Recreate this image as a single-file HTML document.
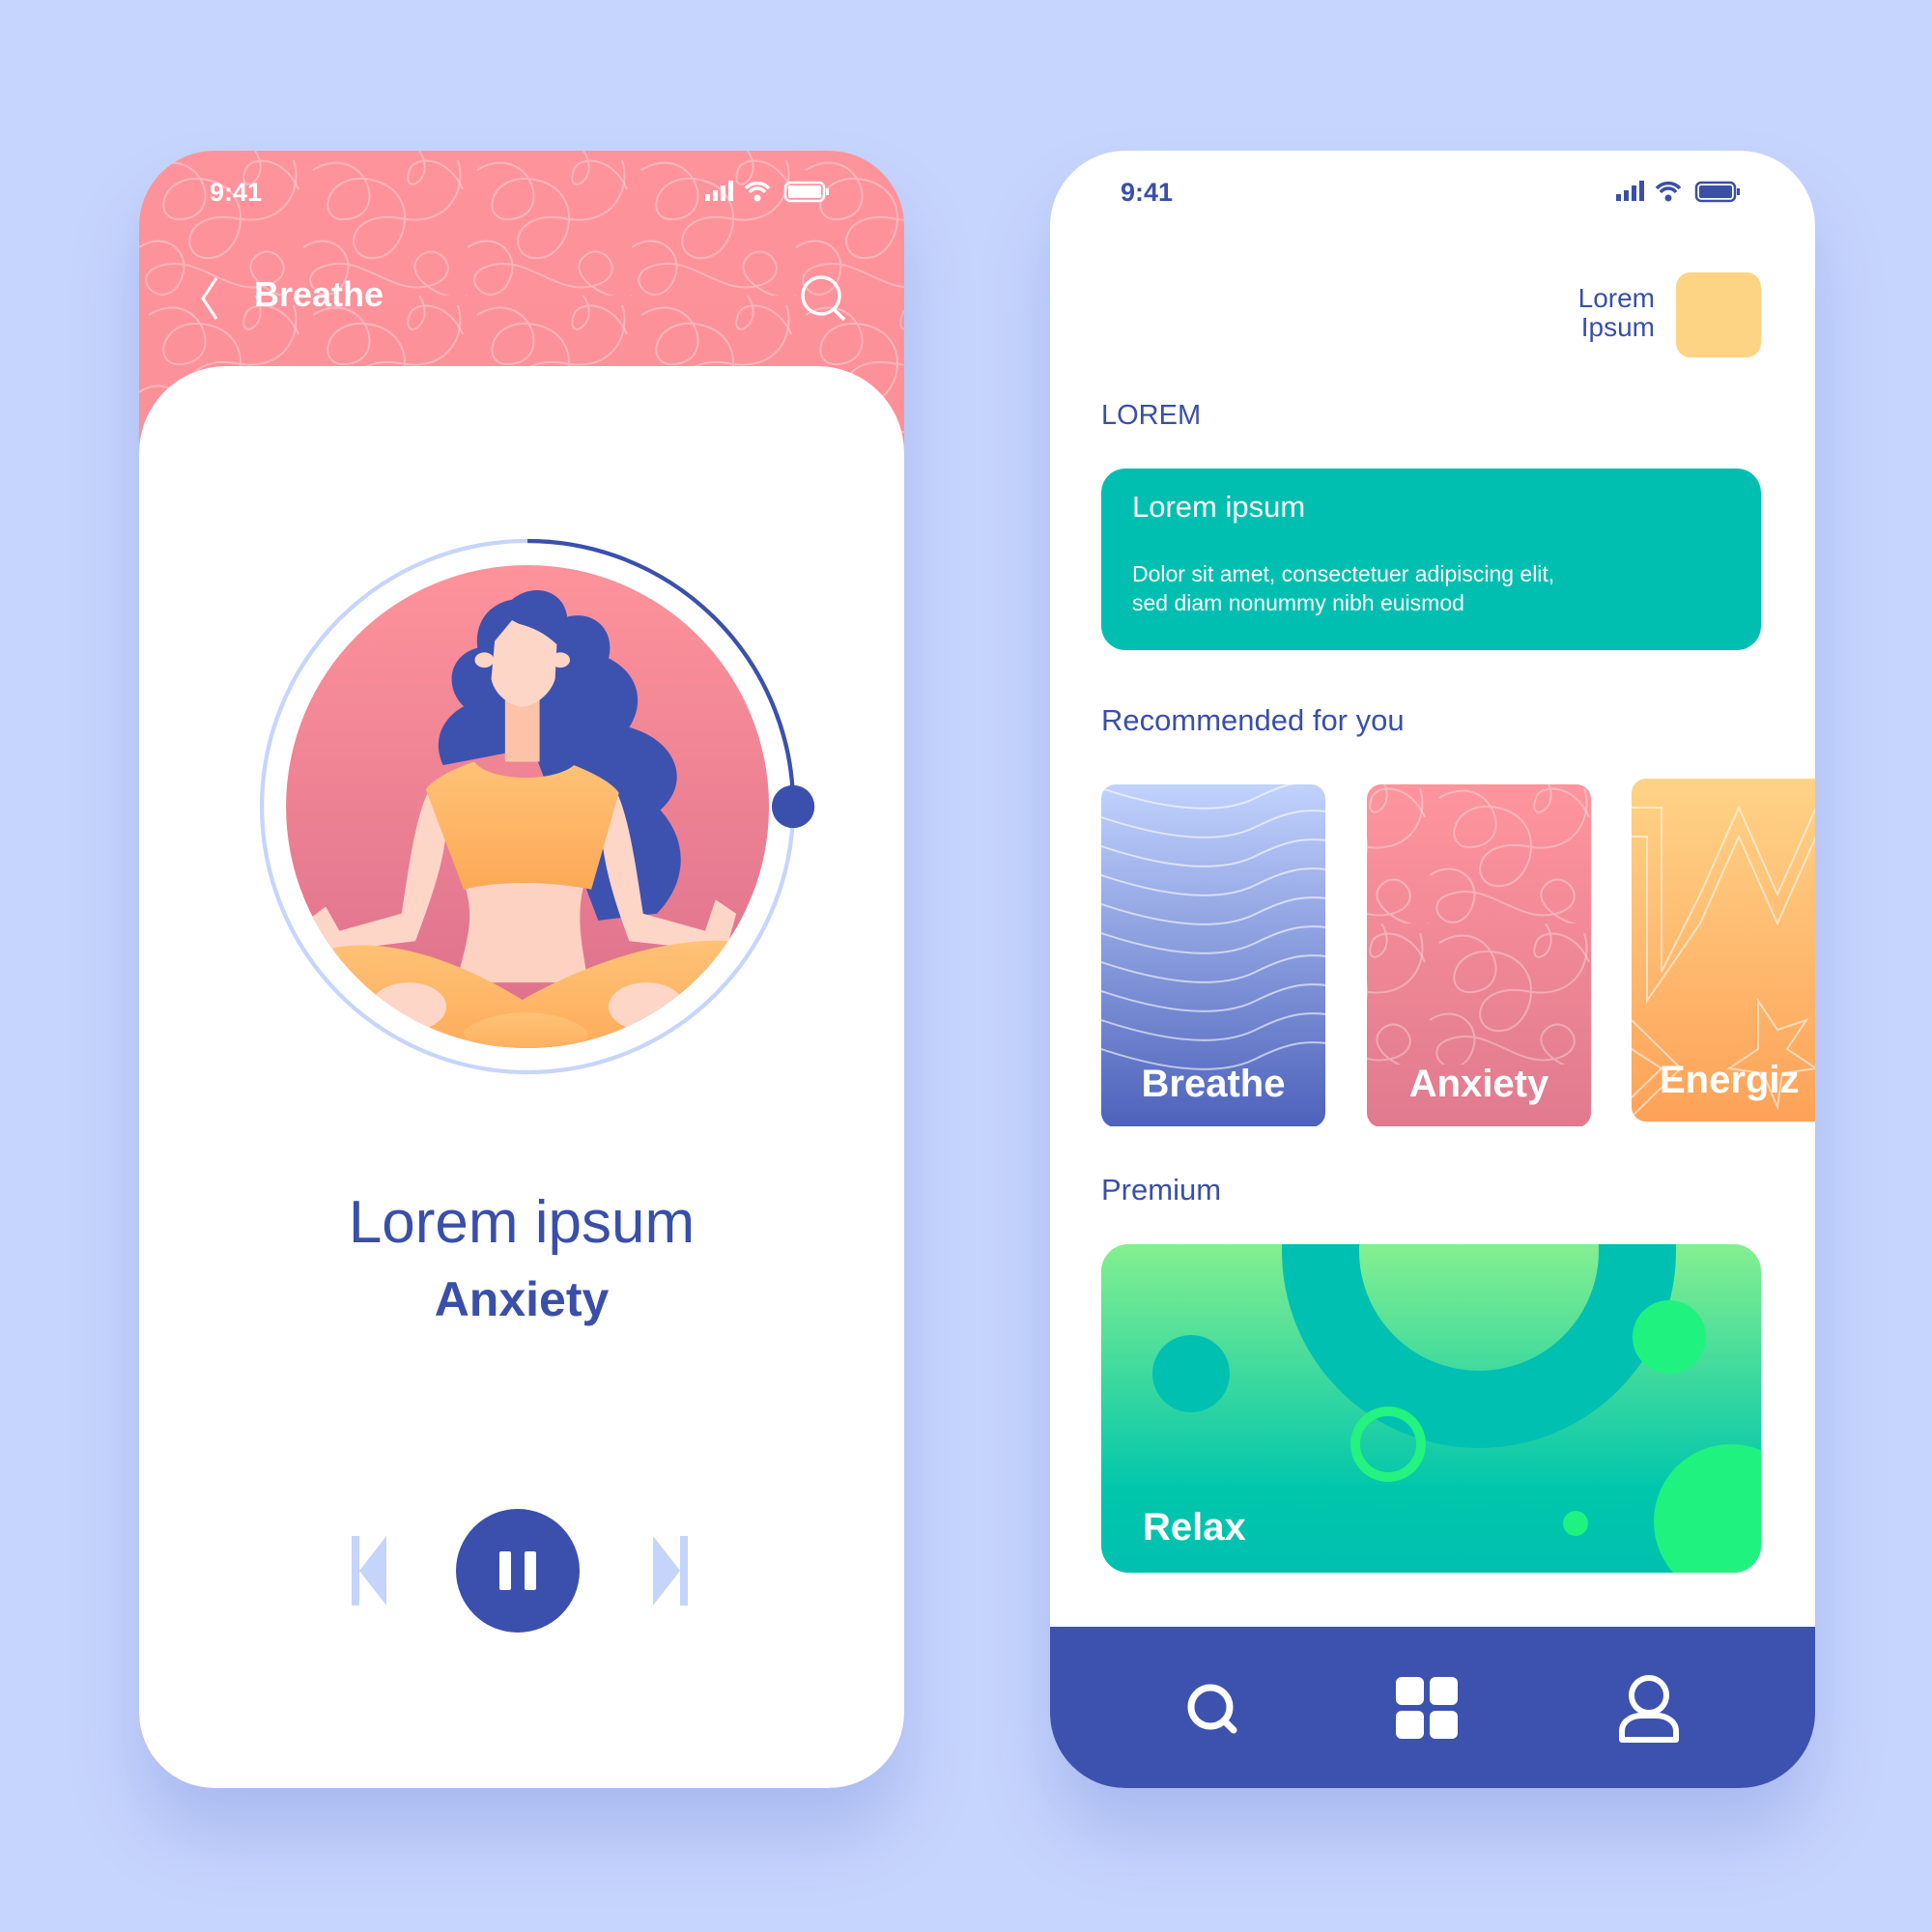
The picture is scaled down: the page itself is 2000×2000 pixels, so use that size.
<!DOCTYPE html>
<html><head><meta charset="utf-8">
<style>
*{margin:0;padding:0;box-sizing:border-box}
body{width:2000px;height:2000px;background:#c6d5fd;position:relative;overflow:hidden;font-family:"Liberation Sans",sans-serif}
.ph{position:absolute;top:156px;width:792px;height:1695px;border-radius:78px;overflow:hidden;box-shadow:0 50px 70px rgba(100,120,210,.28)}
.abs{position:absolute}
</style></head><body>
<svg width="0" height="0" style="position:absolute">
<defs>
<pattern id="scrib" width="170" height="150" patternUnits="userSpaceOnUse">
<g fill="none" stroke="rgba(255,255,255,.32)" stroke-width="2">
<path d="M10,20 C60,-10 90,60 50,70 C10,80 20,20 70,30 C120,40 110,100 80,110 C40,120 40,60 100,70 C150,80 170,40 160,10"/>
<path d="M0,100 C30,80 60,110 40,140 C20,165 -10,130 20,120 C60,105 90,150 130,140 C170,130 140,90 120,110 C100,130 150,160 170,150"/>
<path d="M120,0 C140,30 100,50 110,20 C115,5 150,5 165,40"/>
</g></pattern>
</defs></svg>

<!-- LEFT PHONE -->
<div class="ph" style="left:144px;background:linear-gradient(#fe939b,#f2828e)">
 <svg class="abs" style="left:0;top:0" width="792" height="460"><rect width="792" height="460" fill="url(#scrib)"/></svg>
 <div class="abs" style="left:73px;top:28px;color:#fff;font-weight:bold;font-size:27px">9:41</div>
 <svg class="abs" style="left:584px;top:30px" width="132" height="26">
  <rect x="2" y="15" width="5" height="7" fill="#fff"/><rect x="10" y="11" width="5" height="11" fill="#fff"/><rect x="18" y="6" width="5" height="16" fill="#fff"/><rect x="26" y="1" width="5" height="21" fill="#fff"/>
  <path d="M44,9 A16,16 0 0 1 68,9 M48,13 A10,10 0 0 1 64,13" stroke="#fff" stroke-width="3.5" fill="none"/><circle cx="56" cy="19" r="3.5" fill="#fff"/>
  <rect x="85" y="3" width="40" height="19" rx="5" fill="none" stroke="#fff" stroke-width="2.5"/><rect x="88" y="6" width="34" height="13" rx="2" fill="#fff"/><rect x="127" y="9" width="3" height="7" fill="#fff"/>
 </svg>
 <svg class="abs" style="left:58px;top:128px" width="30" height="50"><path d="M22,4 L8,25 L22,46" stroke="#fff" stroke-width="3" fill="none"/></svg>
 <div class="abs" style="left:119px;top:128px;color:#fff;font-weight:bold;font-size:36px">Breathe</div>
 <svg class="abs" style="left:680px;top:124px" width="60" height="60"><circle cx="26" cy="26" r="19" stroke="#fff" stroke-width="3.5" fill="none"/><path d="M39,40 L50,51" stroke="#fff" stroke-width="3.5"/></svg>
 <div class="abs" style="left:0;top:223px;width:792px;height:1472px;background:#fff;border-radius:90px 90px 78px 78px"></div>
 <div class="abs" style="left:0;top:1074px;width:792px;text-align:center;color:#3a4fa8;font-size:62px">Lorem ipsum</div>
 <div class="abs" style="left:0;top:1160px;width:792px;text-align:center;color:#3a4fa8;font-size:50px;font-weight:bold">Anxiety</div>
 <svg class="abs" style="left:210px;top:1400px" width="380" height="140">
  <rect x="10" y="34" width="8" height="72" fill="#c5d4fb"/><path d="M18,70 L46,34 L46,106 Z" fill="#c5d4fb"/>
  <circle cx="182" cy="70" r="64" fill="#3b50ad"/><rect x="163" y="50" width="12" height="40" rx="2" fill="#fff"/><rect x="189" y="50" width="12" height="40" rx="2" fill="#fff"/>
  <rect x="350" y="34" width="8" height="72" fill="#c5d4fb"/><path d="M350,70 L322,34 L322,106 Z" fill="#c5d4fb"/>
 </svg>
</div>
<svg class="abs" style="left:280px;top:560px;overflow:visible" width="560" height="540" viewBox="0 0 1568 1512">
 <defs>
  <linearGradient id="bg1" x1="0" y1="0" x2="0" y2="1"><stop offset="0" stop-color="#fe939b"/><stop offset="1" stop-color="#db6f8c"/></linearGradient>
  <linearGradient id="or" x1="0" y1="0" x2="0" y2="1"><stop offset="0" stop-color="#ffc277"/><stop offset="1" stop-color="#fca956"/></linearGradient>
  <clipPath id="cc"><circle cx="745" cy="770" r="700"/></clipPath>
 </defs>
 <circle cx="745" cy="770" r="770" fill="none" stroke="#c6d5fb" stroke-width="12"/>
 <path d="M745,0 A770,770 0 0 1 1515,770" fill="none" stroke="#3b50ad" stroke-width="12"/>
 <circle cx="1515" cy="770" r="62" fill="#3b50ad"/>
 <circle cx="745" cy="770" r="700" fill="url(#bg1)"/>
 <g clip-path="url(#cc)">
  <path d="M700,170 C760,120 850,140 860,220 C940,200 1000,260 980,340 C1060,380 1090,460 1040,540 C1180,580 1220,700 1130,780 C1220,880 1200,1000 1120,1080 L950,1100 L760,600 L500,650 C460,560 520,500 560,480 C500,420 520,330 600,310 C590,230 640,180 700,170 Z" fill="#3d52ae"/>
  <rect x="680" y="440" width="100" height="200" fill="#fdc3a9"/>
  <ellipse cx="620" cy="345" rx="28" ry="22" fill="#fdd6c8"/><ellipse cx="840" cy="345" rx="28" ry="22" fill="#fdd6c8"/>
  <path d="M700,230 L650,290 L640,400 C650,450 700,480 730,480 C760,480 810,450 825,400 L830,300 C800,270 760,250 720,240 Z" fill="#fdd6c8"/>
  <path d="M460,720 C420,800 400,950 380,1080 L200,1130 L160,1060 L120,1090 L170,1190 L420,1160 C480,1000 520,880 510,760 Z" fill="#fdd6c8"/>
  <path d="M1000,720 C1040,800 1060,950 1080,1080 L1260,1130 L1290,1040 L1350,1080 L1320,1190 L1040,1160 C980,1000 950,880 960,760 Z" fill="#fdd6c8"/>
  <path d="M560,990 L910,990 C880,1100 910,1200 920,1280 L540,1280 C560,1180 600,1100 560,990 Z" fill="#fdd2c2"/>
  <path d="M450,720 C480,680 560,650 590,640 C640,700 820,700 880,650 C930,670 990,700 1010,730 L930,1010 C800,985 660,985 560,1010 Z" fill="url(#or)"/>
  <path d="M180,1180 C320,1150 520,1200 730,1330 C960,1200 1180,1150 1330,1160 L1230,1320 L1040,1520 L440,1520 L260,1320 Z" fill="url(#or)"/>
  <ellipse cx="400" cy="1350" rx="110" ry="70" fill="#fdd6c8"/><ellipse cx="1090" cy="1350" rx="110" ry="70" fill="#fdd6c8"/>
  <path d="M560,1420 C640,1350 840,1350 920,1420 L900,1520 L580,1520 Z" fill="url(#or)"/>
 </g>
</svg>

<!-- RIGHT PHONE -->
<div class="ph" style="left:1087px;background:#fff">
 <div class="abs" style="left:73px;top:28px;color:#3a4fa8;font-weight:bold;font-size:27px">9:41</div>
 <svg class="abs" style="left:584px;top:30px" width="132" height="26">
  <rect x="2" y="15" width="5" height="7" fill="#3a4fa8"/><rect x="10" y="11" width="5" height="11" fill="#3a4fa8"/><rect x="18" y="6" width="5" height="16" fill="#3a4fa8"/><rect x="26" y="1" width="5" height="21" fill="#3a4fa8"/>
  <path d="M44,9 A16,16 0 0 1 68,9 M48,13 A10,10 0 0 1 64,13" stroke="#3a4fa8" stroke-width="3.5" fill="none"/><circle cx="56" cy="19" r="3.5" fill="#3a4fa8"/>
  <rect x="85" y="3" width="40" height="19" rx="5" fill="none" stroke="#3a4fa8" stroke-width="2.5"/><rect x="88" y="6" width="34" height="13" rx="2" fill="#3a4fa8"/><rect x="127" y="9" width="3" height="7" fill="#3a4fa8"/>
 </svg>
 <div class="abs" style="left:400px;top:138px;width:226px;text-align:right;color:#3a4fa8;font-size:28px;line-height:30px">Lorem<br>Ipsum</div>
 <div class="abs" style="left:648px;top:126px;width:88px;height:88px;border-radius:15px;background:#fdd484"></div>
 <div class="abs" style="left:53px;top:258px;color:#3a4fa8;font-size:29px">LOREM</div>
 <div class="abs" style="left:53px;top:329px;width:683px;height:188px;border-radius:25px;background:#00bfb1;color:#fff">
  <div class="abs" style="left:32px;top:22px;font-size:31px">Lorem ipsum</div>
  <div class="abs" style="left:32px;top:94px;font-size:23px;line-height:30px">Dolor sit amet, consectetuer adipiscing elit,<br>sed diam nonummy nibh euismod</div>
 </div>
 <div class="abs" style="left:53px;top:572px;color:#3a4fa8;font-size:31px">Recommended for you</div>
 <svg class="abs" style="left:53px;top:650px" width="740" height="360">
  <defs>
   <linearGradient id="gb" x1="0" y1="0" x2="0" y2="1"><stop offset="0" stop-color="#c1d2fd"/><stop offset="1" stop-color="#4d62bb"/></linearGradient>
   <linearGradient id="gp" x1="0" y1="0" x2="0" y2="1"><stop offset="0" stop-color="#fe959d"/><stop offset="1" stop-color="#e07a8e"/></linearGradient>
   <linearGradient id="go" x1="0" y1="0" x2="0" y2="1"><stop offset="0" stop-color="#fed387"/><stop offset="1" stop-color="#fda258"/></linearGradient>
   <clipPath id="c1"><rect x="0" y="6" width="232" height="355" rx="15"/></clipPath>
   <clipPath id="c2"><rect x="275" y="6" width="232" height="355" rx="15"/></clipPath>
   <clipPath id="c3"><rect x="549" y="0" width="250" height="355" rx="15"/></clipPath>
  </defs>
  <rect x="0" y="6" width="232" height="355" rx="15" fill="url(#gb)"/>
  <g clip-path="url(#c1)" fill="none" stroke="rgba(255,255,255,.6)" stroke-width="2">
   <path d="M0,10 C60,30 120,40 160,20 C190,5 210,0 240,5"/><path d="M0,40 C60,60 120,70 160,50 C190,35 210,30 240,35"/><path d="M0,70 C60,90 120,100 160,80 C190,65 210,60 240,65"/><path d="M0,100 C60,120 120,130 160,110 C190,95 210,90 240,95"/><path d="M0,130 C60,150 120,160 160,140 C190,125 210,120 240,125"/><path d="M0,160 C60,180 120,190 160,170 C190,155 210,150 240,155"/><path d="M0,190 C60,210 120,220 160,200 C190,185 210,180 240,185"/><path d="M0,220 C60,240 120,250 160,230 C190,215 210,210 240,215"/><path d="M0,250 C60,270 120,280 160,260 C190,245 210,240 240,245"/><path d="M0,280 C60,300 120,310 160,290 C190,275 210,270 240,275"/>
  </g>
  <rect x="275" y="6" width="232" height="355" rx="15" fill="url(#gp)"/>
  <rect x="275" y="6" width="232" height="290" fill="url(#scrib)" clip-path="url(#c2)"/>
  <rect x="549" y="0" width="250" height="355" rx="15" fill="url(#go)"/>
  <g clip-path="url(#c3)" fill="none" stroke="rgba(255,255,255,.55)" stroke-width="2">
   <path d="M549,30 L580,30 L580,200 L620,120 L660,30 L700,120 L740,30"/><path d="M549,60 L565,60 L565,230 L620,150 L660,60 L700,150 L740,60"/><path d="M549,250 L600,300 L549,350"/><path d="M549,280 L580,300 L549,330"/><path d="M680,230 L700,260 L730,250 L710,280 L740,300 L705,305 L700,340 L685,305 L650,300 L680,280 Z"/>
  </g>
  <text x="116" y="329" text-anchor="middle" fill="#fff" font-weight="bold" font-size="40" font-family="Liberation Sans,sans-serif">Breathe</text>
  <text x="391" y="329" text-anchor="middle" fill="#fff" font-weight="bold" font-size="40" font-family="Liberation Sans,sans-serif">Anxiety</text>
  <text x="578" y="325" fill="#fff" font-weight="bold" font-size="40" font-family="Liberation Sans,sans-serif">Energiz</text>
 </svg>
 <div class="abs" style="left:53px;top:1058px;color:#3a4fa8;font-size:31px">Premium</div>
 <svg class="abs" style="left:53px;top:1132px" width="683" height="340">
  <defs>
   <linearGradient id="gg" x1="0" y1="0" x2="0" y2="1"><stop offset="0" stop-color="#84ef8f"/><stop offset="0.75" stop-color="#00c6ac"/><stop offset="1" stop-color="#00c0b0"/></linearGradient>
   <clipPath id="c4"><rect width="683" height="340" rx="28"/></clipPath>
  </defs>
  <rect width="683" height="340" rx="28" fill="url(#gg)"/>
  <g clip-path="url(#c4)">
   <circle cx="391" cy="7" r="164" fill="none" stroke="#00c0b2" stroke-width="80"/>
   <circle cx="93" cy="134" r="40" fill="#00c0b2"/>
   <circle cx="588" cy="96" r="38" fill="#20f27f"/>
   <circle cx="297" cy="207" r="34" fill="none" stroke="#25f27f" stroke-width="10"/>
   <circle cx="652" cy="287" r="80" fill="#20f27f"/>
   <circle cx="491" cy="289" r="13" fill="#20f27f"/>
  </g>
  <text x="43" y="306" fill="#fff" font-weight="bold" font-size="40" font-family="Liberation Sans,sans-serif">Relax</text>
 </svg>
 <div class="abs" style="left:0;top:1528px;width:792px;height:167px;background:#3c52ae"></div>
 <svg class="abs" style="left:0;top:1528px" width="792" height="167">
  <circle cx="166" cy="83" r="20" stroke="#fff" stroke-width="7" fill="none"/><path d="M180,97 L190,107" stroke="#fff" stroke-width="7" stroke-linecap="round"/>
  <rect x="358" y="52" width="29" height="29" rx="6" fill="#fff"/><rect x="393" y="52" width="29" height="29" rx="6" fill="#fff"/><rect x="358" y="87" width="29" height="29" rx="6" fill="#fff"/><rect x="393" y="87" width="29" height="29" rx="6" fill="#fff"/>
  <circle cx="620" cy="71" r="18" stroke="#fff" stroke-width="6" fill="none"/><path d="M592,117 L592,108 C592,98 602,92 612,92 L628,92 C638,92 648,98 648,108 L648,117 Z" stroke="#fff" stroke-width="6" fill="none" stroke-linejoin="round"/>
 </svg>
</div>
</body></html>
